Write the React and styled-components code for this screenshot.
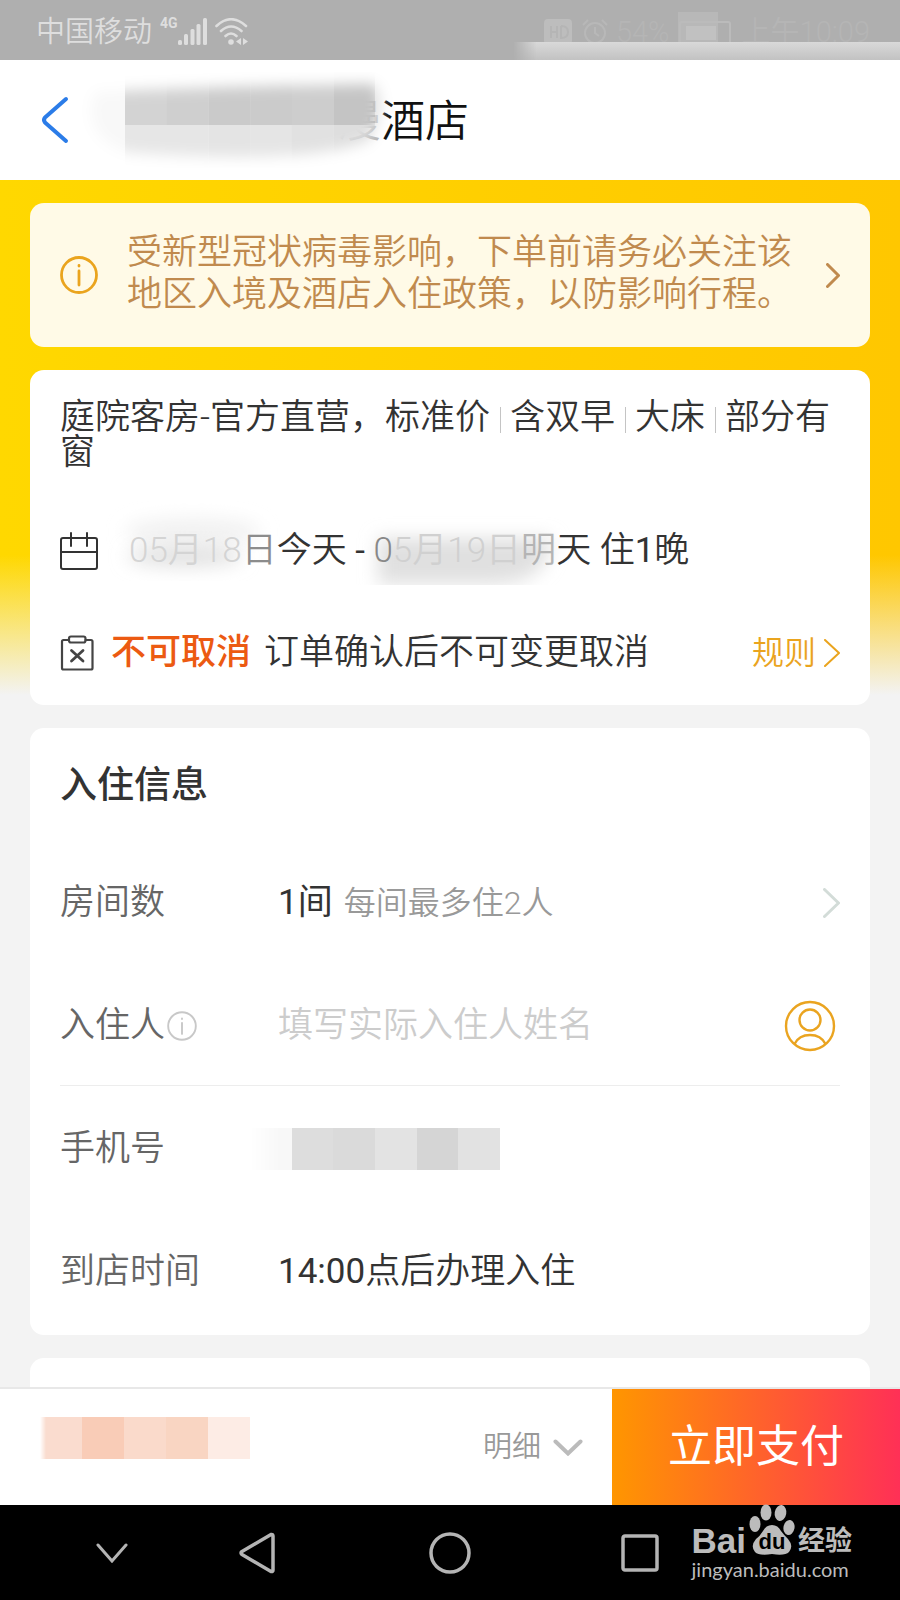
import React from "react";
import styled, { createGlobalStyle, css } from "styled-components";

const GlobalStyle = createGlobalStyle`
  * { box-sizing: border-box; }
  body {
    margin: 0;
    background: #f3f3f3;
    color: #333;
    font-family: Roboto, "Noto Sans CJK SC", sans-serif;
    font-size: 35px;
    font-weight: 350;
    line-height: 42px;
  }
  button, input { font: inherit; color: inherit; }
`;

const plainButton = css`
  border: 0;
  margin: 0;
  padding: 0;
  background: none;
  cursor: pointer;
`;

const Screen = styled.div`
  display: flex;
  flex-direction: column;
  height: 100vh;
`;

const StatusBar = styled.div`
  position: relative;
  flex: none;
  display: flex;
  align-items: center;
  justify-content: space-between;
  height: 60px;
  padding: 4px 30px 0 36px;
  background: #afafaf;
  font-size: 29px;
`;

const StatusGroup = styled.div`
  display: flex;
  align-items: center;
  gap: 8px;
  color: ${(p) => p.$color};
`;

const NetworkTag = styled.span`
  align-self: flex-start;
  margin-right: -8px;
  font: 700 14px/24px Roboto, sans-serif;
`;

const StatusSmear = styled.div`
  position: absolute;
  right: 0;
  bottom: 0;
  width: 43%;
  height: 18px;
  background: linear-gradient(#d9d9d9, #c2c2c2);
  mask-image: linear-gradient(90deg, transparent, #000 24px);
`;

const Header = styled.header`
  position: relative;
  flex: none;
  display: flex;
  align-items: center;
  height: 120px;
  padding: 0 40px;
  background: #fff;
`;

const BackButton = styled.button`
  ${plainButton}
  display: flex;
  color: #2b7ce8;
`;

const HotelName = styled.h1`
  margin: 0;
  padding: 4px 0 0 267px;
  color: #111;
  font-size: 44px;
  font-weight: 350;
  line-height: 48px;
`;

const Erased = styled.span`
  color: ${(p) => p.$color};
`;

const Content = styled.main`
  flex: 1;
  min-height: 0;
  overflow-y: auto;
  scrollbar-width: none;
  background: linear-gradient(transparent 375px, #f3f3f3 515px),
    linear-gradient(90deg, #ffd800, #ffc700);
`;

const CardList = styled.div`
  display: flex;
  flex-direction: column;
  gap: 23px;
  padding: 23px 30px;
`;

const Card = styled.section`
  padding: ${(p) => p.$padding || "0 30px 3px"};
  border-radius: 14px;
  background: #fff;
`;

const Notice = styled.button`
  ${plainButton}
  display: flex;
  align-items: center;
  height: 144px;
  padding: 0 30px;
  border-radius: 14px;
  background: #fffae7;
  color: #c08a4e;
  text-align: left;
`;

const NoticeText = styled.span`
  flex: 1;
  padding: 0 15px 2px 29px;
`;

const RoomName = styled.h2`
  margin: 0 0 30px;
  font-size: 35px;
  font-weight: 350;
  line-height: 35px;
`;

const Divider = styled.span`
  display: inline-block;
  width: 1px;
  height: 26px;
  margin: 0 9px 0 10px;
  background: #c4c4c4;
  vertical-align: -4px;
`;

const InfoLine = styled.div`
  position: relative;
  display: flex;
  align-items: center;
  height: 102px;
`;

const StayDates = styled.span`
  position: relative;
  margin-left: 31px;
  white-space: pre;
`;

const Policy = styled.span`
  flex: 1;
  display: flex;
  gap: 13px;
  margin-left: 17px;
`;

const Warning = styled.strong`
  color: #ec5a12;
  font-weight: 500;
`;

const RuleButton = styled.button`
  ${plainButton}
  display: flex;
  align-items: center;
  gap: 8px;
  color: #eaa41e;
  font-size: 32px;
`;

const Smudge = styled.svg`
  position: absolute;
  left: ${(p) => p.$left}px;
  top: ${(p) => p.$top}px;
`;

const SectionTitle = styled.h2`
  display: flex;
  align-items: center;
  height: 112px;
  margin: 0;
  padding-top: 4px;
  font-size: 37px;
  font-weight: 500;
`;

const Field = styled.div`
  display: grid;
  grid-template-columns: 218px 1fr auto;
  align-items: center;
  height: 123px;
  padding-top: 3px;
  border-bottom: 1px solid ${(p) => (p.$ruled ? "#ededed" : "transparent")};
`;

const FieldLabel = styled.label`
  display: flex;
  align-items: center;
  gap: 2px;
  color: #666;
`;

const FieldValue = styled.output`
  display: flex;
  align-items: center;
  gap: ${(p) => p.$gap || 0}px;
`;

const Hint = styled.span`
  color: #999;
  font-size: 32px;
`;

const Amount = styled.span`
  font-weight: 400;
`;

const NameInput = styled.input`
  width: 100%;
  min-width: 0;
  padding: 0;
  border: 0;
  outline: 0;
  background: none;
  &::placeholder { color: #ccc; opacity: 1; }
`;

const IconButton = styled.button`
  ${plainButton}
  display: flex;
  margin-right: ${(p) => p.$inset || 0}px;
  color: ${(p) => p.$color};
`;

const MosaicBox = styled.span`
  display: flex;
  width: ${(p) => p.$width}px;
  height: 42px;
  margin-left: ${(p) => p.$shift || 0}px;
  mask-image: linear-gradient(90deg, transparent, #000 ${(p) => p.$fade}px);
`;

const MosaicCell = styled.span`
  flex: 1;
  background: ${(p) => p.$tone};
`;

const Empty = styled.div`
  height: 140px;
`;

const PayBar = styled.footer`
  flex: none;
  display: flex;
  align-items: center;
  height: 118px;
  border-top: 2px solid #e8e8e8;
  background: #fff;
`;

const Price = styled.div`
  flex: 1;
  padding: 0 0 18px 40px;
`;

const DetailButton = styled.button`
  ${plainButton}
  display: flex;
  align-items: center;
  gap: 12px;
  margin-right: 29px;
  color: #999;
  font-size: 29px;
`;

const PayButton = styled.button`
  ${plainButton}
  align-self: stretch;
  width: 32%;
  background: linear-gradient(90deg, #ff9600, #ff3056);
  color: #fff;
  font-size: 44px;
  font-weight: 400;
`;

const SystemNav = styled.nav`
  position: relative;
  flex: none;
  display: grid;
  grid-template-columns: 184fr 106fr 280fr 100fr 210fr;
  align-items: center;
  justify-items: center;
  height: 95px;
  padding-left: 20px;
  background: #000;
  color: #b4b4b4;
`;

const Watermark = styled.div`
  position: absolute;
  right: 48px;
  bottom: 18px;
  display: flex;
  flex-direction: column;
  color: #bcbcbc;
`;

const Brand = styled.div`
  display: flex;
  align-items: flex-end;
  height: 52px;
  gap: 3px;
`;

const BrandWord = styled.span`
  font: 700 ${(p) => p.$size}px/30px "Liberation Sans", "Noto Sans CJK SC", sans-serif;
`;

const PawMark = styled.span`
  position: relative;
  display: flex;
`;

const PawWord = styled.span`
  position: absolute;
  left: 0;
  right: 0;
  bottom: 2px;
  color: #000;
  font: 700 22px/24px "Liberation Sans", sans-serif;
  text-align: center;
`;

const SiteLink = styled.a`
  color: inherit;
  font: 400 20px/26px Lato, sans-serif;
  text-decoration: none;
`;

function Chevron({ width, height, stroke = 3 }) {
  const e = stroke / 2;
  return (
    <svg width={width} height={height} fill="none" stroke="currentColor" strokeWidth={stroke} strokeLinecap="round" strokeLinejoin="round" aria-hidden="true">
      <path d={`M${e} ${e}L${width - e} ${height / 2}L${e} ${height - e}`} />
    </svg>
  );
}

function DownChevron({ width, height, stroke, color = "currentColor" }) {
  const e = stroke / 2 + 0.5;
  return (
    <svg width={width} height={height} fill="none" stroke={color} strokeWidth={stroke} strokeLinecap="round" aria-hidden="true">
      <path d={`M${e} ${e}L${width / 2} ${height - e}L${width - e} ${e}`} />
    </svg>
  );
}

function InfoIcon({ size, color, stroke }) {
  return (
    <svg width={size} height={size} viewBox="0 0 38 38" fill="none" stroke={color} strokeWidth={stroke} strokeLinecap="round" aria-hidden="true">
      <circle cx="19" cy="19" r="17.5" />
      <path d="M19 15V29M19 9.5v.6" />
    </svg>
  );
}

function Mosaic({ cells, ...box }) {
  return (
    <MosaicBox {...box} aria-hidden="true">
      {cells.map((tone, i) => (
        <MosaicCell key={i} $tone={tone} />
      ))}
    </MosaicBox>
  );
}

function SignalIcons() {
  return (
    <>
      <svg width="29" height="28" fill="#dedede" aria-hidden="true">
        <rect x="0" y="22" width="4" height="5" rx="1.5" />
        <rect x="6" y="16" width="4" height="11" rx="1.5" />
        <rect x="12.500" y="11" width="4" height="16" rx="1.5" />
        <rect x="18.500" y="6" width="4" height="21" rx="1.5" />
        <rect x="25" y="0" width="4" height="27" rx="1.5" />
      </svg>
      <svg width="33" height="28" fill="none" stroke="#dedede" strokeWidth="2.6" strokeLinecap="round" aria-hidden="true">
        <path d="M1.500 8Q16 -5.500 31 8M6 13Q16 4 26.500 13M10.500 18Q16 13 21.500 18" />
        <circle cx="16" cy="24" r="2.800" fill="#dedede" stroke="none" />
        <path d="M26 20v7l-5-3.500zM28 20v7l5-3.500z" fill="#dedede" stroke="none" />
      </svg>
    </>
  );
}

function NameSmudge() {
  const top = ["#d3d3d3", "#cfcfcf", "#cacaca", "#cbcbcb", "#cdcdcd", "#c4c4c4"];
  const bottom = ["#e6e6e6", "#e6e6e6", "#e4e4e4", "#e5e5e5", "#e1e1e1", "#dedede"];
  return (
    <Smudge $left={70} $top={12} width="330" height="96" aria-hidden="true">
      <defs>
        <filter id="soft" x="-20%" y="-40%" width="140%" height="180%">
          <feGaussianBlur stdDeviation="7" />
        </filter>
        <mask id="nameMask">
          <path d="M25 20Q160 14 304 12Q318 30 300 68Q240 94 55 80Q10 62 25 20" fill="#fff" filter="url(#soft)" />
        </mask>
      </defs>
      <g mask="url(#nameMask)">
        <rect x="0" y="0" width="55" height="96" fill="#f8f8f8" />
        {top.map((c, i) => (
          <rect key={i} x={55 + i * 41.7} y="0" width="42" height="53" fill={c} />
        ))}
        {bottom.map((c, i) => (
          <rect key={i} x={55 + i * 41.7} y="53" width="42" height="43" fill={c} />
        ))}
        <rect x="305" y="0" width="25" height="96" fill="#e0e0e0" />
      </g>
    </Smudge>
  );
}

function DateSmudges() {
  return (
    <Smudge $left={35} $top={0} width="480" height="100" aria-hidden="true">
      <defs>
        <filter id="dateSoft" x="-20%" y="-60%" width="140%" height="220%">
          <feGaussianBlur stdDeviation="9" />
        </filter>
        <clipPath id="dateClip">
          <rect x="0" y="0" width="480" height="85" />
        </clipPath>
      </defs>
      <g clipPath="url(#dateClip)">
        <ellipse cx="98" cy="32" rx="68" ry="14" fill="#f1f1f1" filter="url(#dateSoft)" />
        <ellipse cx="90" cy="56" rx="58" ry="11" fill="#e2e2e2" filter="url(#dateSoft)" />
        <path d="M283 38H456Q455 82 400 84H283z" fill="#e0e0e0" filter="url(#dateSoft)" />
      </g>
    </Smudge>
  );
}

function CalendarIcon() {
  return (
    <svg width="38" height="38" fill="none" stroke="#333" strokeWidth="2" strokeLinecap="round" aria-hidden="true">
      <rect x="1" y="6" width="36" height="31" rx="2" />
      <path d="M1 20H37M11 1V14M27 1V14" />
    </svg>
  );
}

function ClipboardIcon() {
  return (
    <svg width="34" height="36" fill="none" stroke="#444" strokeWidth="2.200" strokeLinecap="round" aria-hidden="true">
      <path d="M9 5H3.500Q2 5 2 6.500V33Q2 34.500 3.500 34.500H31Q32.500 34.500 32.500 33V6.500Q32.500 5 31 5H25.500" />
      <rect x="9" y="1.500" width="16.500" height="6" rx="2" />
      <path d="M11.500 15.500L23 26M23 15.500L11.500 26" strokeWidth="2.800" />
    </svg>
  );
}

function GuestIcon() {
  return (
    <svg width="52" height="52" fill="none" stroke="#eaa420" strokeWidth="2.400" aria-hidden="true">
      <circle cx="26" cy="26" r="24" />
      <circle cx="26" cy="20" r="10.500" />
      <path d="M10.500 44Q15 35 26 35Q37 35 41.500 44" />
    </svg>
  );
}

export default function App() {
  return (
    <Screen lang="zh-CN">
      <GlobalStyle />
      <StatusBar>
        <StatusGroup $color="#dedede">
          <span>中国移动</span>
          <NetworkTag>4G</NetworkTag>
          <SignalIcons />
        </StatusGroup>
        <StatusGroup $color="#b5b5b5">
          <svg width="64" height="30" aria-hidden="true">
            <rect x="0" y="2" width="28" height="26" rx="4" fill="#bdbdbd" />
            <path d="M7 9V21M7 15H13M13 9V21M17 9V21Q24 21 24 15Q24 9 17 9" fill="none" stroke="#b5b5b5" strokeWidth="2" />
            <circle cx="51" cy="16" r="10" fill="none" stroke="#b8b8b8" strokeWidth="2" />
            <path d="M51 10V16L55 19M39 8L44 3M58 3L63 8" fill="none" stroke="#b8b8b8" strokeWidth="2" />
          </svg>
          <span>54%</span>
          <svg width="56" height="40" aria-hidden="true">
            <rect x="0" y="0" width="40" height="40" fill="#b8b8b8" />
            <rect x="2" y="10" width="50" height="22" rx="2" fill="none" stroke="#bbb" strokeWidth="2" />
            <rect x="8" y="14" width="30" height="14" fill="#c1c1c1" />
          </svg>
          <span>上午10:09</span>
        </StatusGroup>
        <StatusSmear />
      </StatusBar>

      <Header>
        <BackButton aria-label="返回">
          <svg width="30" height="48" fill="none" stroke="currentColor" strokeWidth="4" strokeLinecap="round" strokeLinejoin="round" aria-hidden="true">
            <path d="M26 3L5 21.500Q3 24 5 26.500L26 45" />
          </svg>
        </BackButton>
        <HotelName>
          <Erased $color="#b4b4b4">漫</Erased>酒店
        </HotelName>
        <NameSmudge />
      </Header>

      <Content>
        <CardList>
          <Notice>
            <InfoIcon size={38} color="#eaa41e" stroke={2.8} />
            <NoticeText>受新型冠状病毒影响，下单前请务必关注该地区入境及酒店入住政策，以防影响行程。</NoticeText>
            <Chevron width={14} height={25} />
          </Notice>

          <Card $padding="30px 30px 1px">
            <RoomName>
              庭院客房-官方直营，标准价<Divider />含双早<Divider />大床<Divider />部分有窗
            </RoomName>
            <InfoLine>
              <CalendarIcon />
              <DateSmudges />
              <StayDates>
                <Erased $color="#d4d4d4">05月18</Erased>
                <Erased $color="#8c8c8c">日</Erased>今天 <Amount>-</Amount> <Erased $color="#888">0</Erased>
                <Erased $color="#d0d0d0">5月19日</Erased>
                <Erased $color="#b4b4b4">明</Erased>天 住<Amount>1</Amount>晚
              </StayDates>
            </InfoLine>
            <InfoLine>
              <ClipboardIcon />
              <Policy>
                <Warning>不可取消</Warning>
                <span>订单确认后不可变更取消</span>
              </Policy>
              <RuleButton>
                规则
                <Chevron width={16} height={28} stroke={2} />
              </RuleButton>
            </InfoLine>
          </Card>

          <Card>
            <SectionTitle>入住信息</SectionTitle>
            <Field>
              <FieldLabel htmlFor="rooms">房间数</FieldLabel>
              <FieldValue id="rooms" $gap={11}>
                <Amount>1间</Amount>
                <Hint>每间最多住2人</Hint>
              </FieldValue>
              <IconButton $color="#d3dcd8" aria-label="选择房间数">
                <Chevron width={17} height={30} />
              </IconButton>
            </Field>
            <Field $ruled>
              <FieldLabel htmlFor="guest">
                入住人
                <InfoIcon size={30} color="#c8c8c8" stroke={2.4} />
              </FieldLabel>
              <NameInput id="guest" placeholder="填写实际入住人姓名" />
              <IconButton $color="#eaa420" $inset={4} aria-label="选择入住人">
                <GuestIcon />
              </IconButton>
            </Field>
            <Field>
              <FieldLabel htmlFor="phone">手机号</FieldLabel>
              <FieldValue id="phone">
                <Mosaic $width={250} $shift={-28} $fade={30} cells={["#f8f8f8", "#dddddd", "#dadada", "#e3e3e3", "#d5d5d5", "#e2e2e2"]} />
              </FieldValue>
            </Field>
            <Field>
              <FieldLabel htmlFor="arrival">到店时间</FieldLabel>
              <FieldValue id="arrival">
                <Amount>14:00</Amount>点后办理入住
              </FieldValue>
            </Field>
          </Card>

          <Card>
            <Empty />
          </Card>
        </CardList>
      </Content>

      <PayBar>
        <Price>
          <Mosaic $width={210} $fade={6} cells={["#fadccf", "#f9ccb7", "#fadacb", "#f9d5c2", "#fdece5"]} />
        </Price>
        <DetailButton>
          明细
          <DownChevron width={30} height={17} stroke={4} color="#bbb" />
        </DetailButton>
        <PayButton>立即支付</PayButton>
      </PayBar>

      <SystemNav>
        <IconButton $color="#b4b4b4" aria-label="收起">
          <DownChevron width={32} height={20} stroke={3} />
        </IconButton>
        <IconButton $color="#b4b4b4" aria-label="后退">
          <svg width="36" height="42" fill="none" stroke="currentColor" strokeWidth="3.500" strokeLinejoin="round" aria-hidden="true">
            <path d="M32 2.500Q34 2 34 4V38Q34 40 32 39.500L3 22.500Q1 21 3 19.500Z" />
          </svg>
        </IconButton>
        <IconButton $color="#b4b4b4" aria-label="主屏幕">
          <svg width="42" height="42" fill="none" stroke="currentColor" strokeWidth="3.500" aria-hidden="true">
            <circle cx="21" cy="21" r="19" />
          </svg>
        </IconButton>
        <IconButton $color="#b4b4b4" aria-label="最近任务">
          <svg width="38" height="38" fill="none" stroke="currentColor" strokeWidth="3.500" aria-hidden="true">
            <rect x="2" y="2" width="34" height="34" rx="2" />
          </svg>
        </IconButton>
        <Watermark>
          <Brand>
            <BrandWord $size={35}>Bai</BrandWord>
            <PawMark>
              <svg width="46" height="52" fill="currentColor" aria-hidden="true">
                <ellipse cx="6" cy="20" rx="5.500" ry="8" />
                <ellipse cx="17" cy="8.500" rx="5.500" ry="8" />
                <ellipse cx="31.500" cy="9" rx="5.800" ry="8" transform="rotate(10 31.500 9)" />
                <ellipse cx="40" cy="23.500" rx="5.500" ry="7.500" transform="rotate(10 40 23.500)" />
                <path d="M23 21Q29 21 32 27Q35 31 39 35Q45 42 40 48Q36 52 23 50Q10 52 6 48Q1 42 7 35Q11 32 14 27Q17 21 23 21Z" />
              </svg>
              <PawWord>du</PawWord>
            </PawMark>
            <BrandWord $size={27}>经验</BrandWord>
          </Brand>
          <SiteLink href="#">jingyan.baidu.com</SiteLink>
        </Watermark>
      </SystemNav>
    </Screen>
  );
}
